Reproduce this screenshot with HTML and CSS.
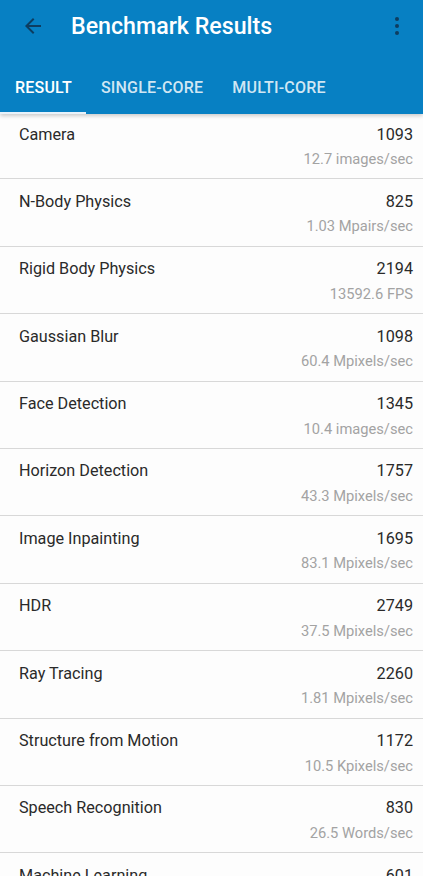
FILE: index.html
```html
<!DOCTYPE html>
<html lang="en">
<head>
<meta charset="UTF-8">
<meta name="viewport" content="width=device-width, initial-scale=1.0">
<title>Benchmark Results</title>
<link rel="stylesheet" href="styles.css">
</head>
<body>
<div id="app-bar">
    <div class="toolbar">
        <svg class="icon back" width="24" height="24" viewBox="0 0 24 24">
            <path d="M20 11H7.83l5.59-5.59L12 4l-8 8 8 8 1.41-1.41L7.83 13H20v-2z" fill="currentColor"/>
        </svg>
        <h1>Benchmark Results</h1>
        <svg class="icon more" width="24" height="24" viewBox="0 0 24 24">
            <circle cx="12" cy="5" r="2" fill="currentColor"/>
            <circle cx="12" cy="12" r="2" fill="currentColor"/>
            <circle cx="12" cy="19" r="2" fill="currentColor"/>
        </svg>
    </div>
    <div class="tabs">
        <div class="tab active">RESULT</div>
        <div class="tab">SINGLE-CORE</div>
        <div class="tab">MULTI-CORE</div>
    </div>
</div>

<div id="results">
    <div class="row"><span class="name">Camera</span><span class="score">1093</span><span class="rate">12.7 images/sec</span></div>
    <div class="row"><span class="name">N-Body Physics</span><span class="score">825</span><span class="rate">1.03 Mpairs/sec</span></div>
    <div class="row"><span class="name">Rigid Body Physics</span><span class="score">2194</span><span class="rate">13592.6 FPS</span></div>
    <div class="row"><span class="name">Gaussian Blur</span><span class="score">1098</span><span class="rate">60.4 Mpixels/sec</span></div>
    <div class="row"><span class="name">Face Detection</span><span class="score">1345</span><span class="rate">10.4 images/sec</span></div>
    <div class="row"><span class="name">Horizon Detection</span><span class="score">1757</span><span class="rate">43.3 Mpixels/sec</span></div>
    <div class="row"><span class="name">Image Inpainting</span><span class="score">1695</span><span class="rate">83.1 Mpixels/sec</span></div>
    <div class="row"><span class="name">HDR</span><span class="score">2749</span><span class="rate">37.5 Mpixels/sec</span></div>
    <div class="row"><span class="name">Ray Tracing</span><span class="score">2260</span><span class="rate">1.81 Mpixels/sec</span></div>
    <div class="row"><span class="name">Structure from Motion</span><span class="score">1172</span><span class="rate">10.5 Kpixels/sec</span></div>
    <div class="row"><span class="name">Speech Recognition</span><span class="score">830</span><span class="rate">26.5 Words/sec</span></div>
    <div class="row"><span class="name">Machine Learning</span><span class="score">601</span><span class="rate">16.8 images/sec</span></div>
</div>
</body>
</html>
```

FILE: styles.css
```css
body {
    font-family: Roboto, "Noto Sans", sans-serif;
    background-color: #fdfdfd;
    margin: 0;
    padding: 0;
    height: 876px;
    overflow: hidden;
}

#app-bar {
    position: relative;
    z-index: 1;
    height: 114px;
    background-color: #0780c3;
    box-shadow: 0 2px 4px rgba(0, 0, 0, 0.2);
    display: flex;
    flex-direction: column;
}

.toolbar {
    height: 52px;
    display: flex;
    align-items: center;
    padding: 0 14px 0 21px;
}

.icon {
    color: #0d3d60;
    flex-shrink: 0;
}

.toolbar h1 {
    flex: 1;
    margin: 0 0 0 26px;
    color: #fff;
    font-size: 23.2px;
    font-weight: 500;
}

.tabs {
    flex: 1;
    display: flex;
    align-items: stretch;
    margin-top: 10px;
}

.tab {
    display: flex;
    align-items: center;
    padding: 0 14px 0 15px;
    color: rgba(255, 255, 255, 0.82);
    font-size: 16px;
    font-weight: 500;
    letter-spacing: 0.2px;
    border-bottom: 2px solid transparent;
}

.tab.active {
    color: #fff;
    border-bottom-color: #e8f2fa;
}

#results {
    margin-top: -2px;
}

.row {
    height: 65.4px;
    box-sizing: content-box;
    border-bottom: 1px solid #d8d8d8;
    display: grid;
    grid-template-columns: 1fr auto;
    grid-template-rows: 42px auto;
    padding: 1px 10px 0 19px;
}

.name {
    align-self: center;
    font-size: 16.2px;
    color: #2a2a2a;
}

.score {
    align-self: center;
    font-size: 16.2px;
    color: #2a2a2a;
}

.rate {
    grid-column: 1 / 3;
    justify-self: end;
    font-size: 14.7px;
    color: #a3a3a3;
    margin-top: -5px;
}
```
